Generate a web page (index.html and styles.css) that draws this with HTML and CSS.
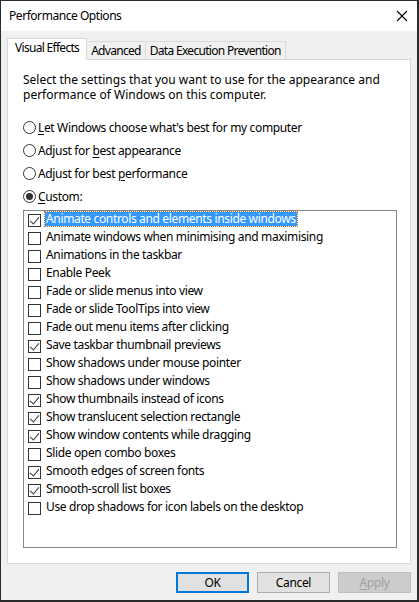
FILE: index.html
```html
<!DOCTYPE html>
<html>
<head>
<meta charset="utf-8">
<link rel="stylesheet" href="styles.css">
</head>
<body>
<div class="window">
  <div class="titlebar">
    <span class="title">Performance Options</span>
    <svg class="close" width="12" height="12" viewBox="0 0 12 12"><path d="M1 1 L11 11 M11 1 L1 11" stroke="#000" stroke-width="1.1" fill="none"/></svg>
  </div>
  <div class="content">
    <div class="tabs">
      <div class="tab selected">Visual Effects</div>
      <div class="tab">Advanced</div>
      <div class="tab">Data Execution Prevention</div>
    </div>
    <div class="panel">
      <p class="intro">Select the settings that you want to use for the appearance and performance of Windows on this computer.</p>
      <div class="radios">
        <div class="radio-row"><span class="radio"></span><span><u>L</u>et Windows choose what's best for my computer</span></div>
        <div class="radio-row"><span class="radio"></span><span>Adjust for <u>b</u>est appearance</span></div>
        <div class="radio-row"><span class="radio"></span><span>Adjust for best <u>p</u>erformance</span></div>
        <div class="radio-row"><span class="radio on"></span><span><u>C</u>ustom:</span></div>
      </div>
      <div class="listbox">
        <div class="item"><span class="cb on"></span><span class="label sel">Animate controls and elements inside windows</span></div>
        <div class="item"><span class="cb"></span><span class="label">Animate windows when minimising and maximising</span></div>
        <div class="item"><span class="cb"></span><span class="label">Animations in the taskbar</span></div>
        <div class="item"><span class="cb"></span><span class="label">Enable Peek</span></div>
        <div class="item"><span class="cb"></span><span class="label">Fade or slide menus into view</span></div>
        <div class="item"><span class="cb"></span><span class="label">Fade or slide ToolTips into view</span></div>
        <div class="item"><span class="cb"></span><span class="label">Fade out menu items after clicking</span></div>
        <div class="item"><span class="cb on"></span><span class="label">Save taskbar thumbnail previews</span></div>
        <div class="item"><span class="cb"></span><span class="label">Show shadows under mouse pointer</span></div>
        <div class="item"><span class="cb"></span><span class="label">Show shadows under windows</span></div>
        <div class="item"><span class="cb on"></span><span class="label">Show thumbnails instead of icons</span></div>
        <div class="item"><span class="cb on"></span><span class="label">Show translucent selection rectangle</span></div>
        <div class="item"><span class="cb on"></span><span class="label">Show window contents while dragging</span></div>
        <div class="item"><span class="cb"></span><span class="label">Slide open combo boxes</span></div>
        <div class="item"><span class="cb on"></span><span class="label">Smooth edges of screen fonts</span></div>
        <div class="item"><span class="cb on"></span><span class="label">Smooth-scroll list boxes</span></div>
        <div class="item"><span class="cb"></span><span class="label">Use drop shadows for icon labels on the desktop</span></div>
      </div>
    </div>
    <div class="buttons">
      <button class="btn default">OK</button>
      <button class="btn">Cancel</button>
      <button class="btn disabled"><u>A</u>pply</button>
    </div>
  </div>
</div>
</body>
</html>
```
FILE: styles.css
```css
* { box-sizing: border-box; }
html, body { margin: 0; padding: 0; }
body {
  width: 419px;
  height: 602px;
  font-family: "Noto Sans", "Open Sans", sans-serif;
  font-size: 12px;
  letter-spacing: -0.35px;
  color: #000;
  overflow: hidden;
}
.window {
  width: 419px;
  height: 602px;
  border-style: solid;
  border-color: #2b2b2b;
  border-width: 1px 2px 2px 1px;
  display: flex;
  flex-direction: column;
  background: #f0f0f0;
}
.titlebar {
  height: 30px;
  background: #fff;
  display: flex;
  align-items: center;
  justify-content: space-between;
  padding: 0 9px 0 8px;
  flex: none;
}
.title { line-height: 16px; letter-spacing: -0.45px; }
.close { display: block; margin-top: -1px; }
.content {
  flex: 1;
  display: flex;
  flex-direction: column;
  padding: 7px 6px 8px 6px;
}
.tabs {
  display: flex;
  align-items: flex-end;
  height: 21px;
  position: relative;
  z-index: 1;
}
.tab {
  height: 18px;
  line-height: 17px;
  padding: 0 4px;
  border: 1px solid #d9d9d9;
  border-bottom: none;
  background: #f0f0f0;
  margin-left: -1px;
  letter-spacing: -0.7px;
}
.tab:first-child { margin-left: 0; }
.tab.selected {
  height: 22px;
  margin-bottom: -1px;
  background: #fff;
  padding: 0 7px;
  line-height: 18px;
  position: relative;
  z-index: 2;
}
.panel {
  height: 505px;
  background: #fff;
  border: 1px solid #d9d9d9;
  padding: 12px 13px 15px 15px;
  display: flex;
  flex-direction: column;
  flex: none;
}
.intro {
  margin: 0;
  line-height: 15px;
  letter-spacing: 0;
}
.radios {
  margin-top: 14px;
  display: flex;
  flex-direction: column;
}
.radio-row {
  height: 23px;
  display: flex;
  align-items: center;
  gap: 2px;
}
.radio {
  width: 13px;
  height: 13px;
  border: 1px solid #333;
  border-radius: 50%;
  flex: none;
  position: relative;
}
.radio.on::after {
  content: "";
  position: absolute;
  left: 2px; top: 2px;
  width: 7px; height: 7px;
  border-radius: 50%;
  background: #333;
}
u { text-decoration: underline; text-underline-offset: 2px; text-decoration-thickness: 1px; }
.listbox {
  margin-top: 2px;
  height: 338px;
  border: 1px solid #828790;
  padding: 0 0 0 4px;
  display: flex;
  flex-direction: column;
}
.item {
  height: 18px;
  display: flex;
  align-items: center;
  flex: none;
}
.cb {
  width: 13px;
  height: 13px;
  border: 1px solid #333;
  flex: none;
  margin-top: 1px;
  position: relative;
  background: #fff;
}
.cb.on::after {
  content: "";
  position: absolute;
  left: 3px; top: 0px;
  width: 4px; height: 8px;
  border: solid #333;
  border-width: 0 1px 1px 0;
  transform: rotate(40deg);
}
.label {
  margin-left: 4px;
  line-height: 14px;
  padding: 0 1px;
  margin-top: -2px;
}
.label.sel {
  background: #3399ff;
  color: #fff;
  outline: 1px dotted #c4701c;
}
.buttons {
  display: flex;
  justify-content: flex-end;
  gap: 8px;
  margin-top: 8px;
}
.btn {
  width: 73px;
  height: 21px;
  font-family: inherit;
  font-size: 12px;
  letter-spacing: inherit;
  background: #e1e1e1;
  border: 1px solid #adadad;
  color: #000;
  padding: 0;
  margin: 0;
  line-height: 17px;
}
.btn.default { border: 2px solid #0078d7; }
.btn.disabled {
  background: #cccccc;
  border-color: #bfbfbf;
  color: #a0a0a0;
}
```
